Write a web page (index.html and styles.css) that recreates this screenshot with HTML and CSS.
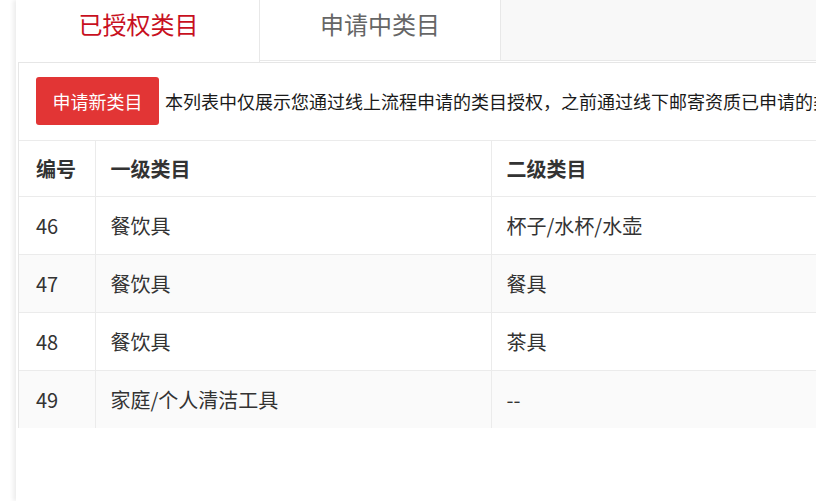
FILE: index.html
```html
<!DOCTYPE html>
<html lang="zh-CN">
<head>
<meta charset="utf-8">
<title>类目授权</title>
<link rel="stylesheet" href="styles.css">
</head>
<body>
<div class="wrap">
  <div class="tabs">
    <div class="tab active">已授权类目</div>
    <div class="tab">申请中类目</div>
    <div class="tab-rest"></div>
  </div>
  <div class="panel">
    <div class="toolbar">
      <button class="btn-apply">申请新类目</button>
      <span class="notice">本列表中仅展示您通过线上流程申请的类目授权，之前通过线下邮寄资质已申请的类目授权</span>
    </div>
    <table class="grid">
      <colgroup>
        <col class="c-id">
        <col class="c-l1">
        <col class="c-l2">
      </colgroup>
      <thead>
        <tr><th>编号</th><th>一级类目</th><th>二级类目</th></tr>
      </thead>
      <tbody>
        <tr><td>46</td><td>餐饮具</td><td>杯子/水杯/水壶</td></tr>
        <tr class="alt"><td>47</td><td>餐饮具</td><td>餐具</td></tr>
        <tr><td>48</td><td>餐饮具</td><td>茶具</td></tr>
        <tr class="alt last"><td>49</td><td>家庭/个人清洁工具</td><td>--</td></tr>
      </tbody>
    </table>
  </div>
</div>
</body>
</html>
```

FILE: styles.css
```css
html, body {
  margin: 0;
  padding: 0;
  background: #fff;
  overflow: hidden;
}
body {
  font-family: "Microsoft YaHei", "Noto Sans CJK SC", "Liberation Sans", sans-serif;
  color: #333;
}
.wrap {
  margin-left: 16px;
  width: 1300px;
  min-height: 501px;
  background: #fff;
  box-shadow: -3px 0 4px rgba(0, 0, 0, 0.07);
}
.tabs {
  display: flex;
  height: 62px;
}
.tab {
  box-sizing: border-box;
  width: 241px;
  height: 61px;
  border-right: 1px solid #e8e8e8;
  border-bottom: 1px solid #e8e8e8;
  background: #fff;
  color: #666;
  font-size: 24px;
  line-height: 48px;
  text-align: center;
}
.tab.active {
  width: 244px;
  padding-left: 2px;
  border-bottom: none;
  color: #c8101e;
  height: 62px;
}
.tab-rest {
  flex: 1;
  height: 61px;
  box-sizing: border-box;
  background: #f8f8f8;
  border-bottom: 1px solid #e8e8e8;
}
.panel {
  margin-left: 2px;
  border-left: 1px solid #e6e6e6;
  border-top: 1px solid #e6e6e6;
}
.toolbar {
  display: flex;
  align-items: center;
  padding: 14px 0 15px 17px;
  white-space: nowrap;
}
.btn-apply {
  width: 123px;
  height: 48px;
  border: none;
  border-radius: 3px;
  background: #e23535;
  color: #fff;
  font-family: inherit;
  font-size: 18px;
  padding: 0;
  flex: none;
}
.notice {
  margin-left: 6px;
  font-size: 18px;
  color: #1a1a1a;
}
.grid {
  border-collapse: collapse;
  table-layout: fixed;
  width: 1200px;
  font-size: 20px;
}
.c-id { width: 76px; }
.c-l1 { width: 396px; }
.c-l2 { width: 728px; }
.grid th,
.grid td {
  text-align: left;
  padding: 0 15px;
  border-top: 1px solid #ebebeb;
  border-right: 1px solid #ebebeb;
  color: #333;
  white-space: nowrap;
}
.grid th:first-child,
.grid td:first-child {
  padding-left: 17px;
}
.grid th {
  height: 55px;
  font-weight: bold;
}
.grid td {
  height: 57px;
}
.grid tr.alt td {
  background: #fafafa;
}
```
